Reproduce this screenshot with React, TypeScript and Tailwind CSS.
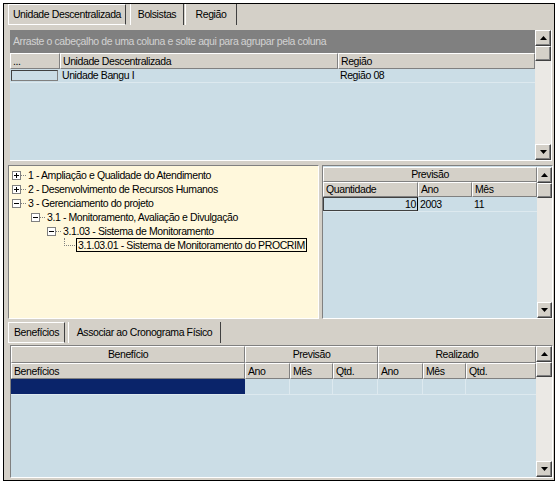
import React from "react";

const raisedBtn =
  "bg-[#d4d0c8] border border-t-white border-l-white border-r-[#404040] border-b-[#404040] shadow-[inset_-1px_-1px_0_#808080]";
const headCell =
  "bg-[#d4d0c8] border-t border-l border-white border-r border-b border-r-[#808080] border-b-[#808080] flex items-center px-[2px] overflow-hidden whitespace-nowrap";

function Arrow({ dir }: { dir: "up" | "down" }) {
  return (
    <svg width="7" height="4" viewBox="0 0 7 4">
      {dir === "up" ? <polygon points="3.5,0 7,4 0,4" fill="#000" /> : <polygon points="0,0 7,0 3.5,4" fill="#000" />}
    </svg>
  );
}

function ScrollBar({ width = 16 }: { width?: number }) {
  return (
    <div className="flex flex-col h-full shrink-0 bg-[#ebe9e5]" style={{ width }}>
      <div className={`${raisedBtn} h-[16px] flex items-center justify-center`}>
        <Arrow dir="up" />
      </div>
      <div className={`${raisedBtn} h-[15px]`} />
      <div className="flex-1" />
      <div className={`${raisedBtn} h-[16px] flex items-center justify-center`}>
        <Arrow dir="down" />
      </div>
    </div>
  );
}

function Tab({ label, selected, w, ml }: { label: string; selected?: boolean; w: string; ml: string }) {
  return (
    <div
      className={`${w} ${ml} h-[21px] flex items-center justify-center border-l border-white border-r border-r-[#404040] ${
        selected ? "border-t border-b" : ""
      }`}
    >
      {label}
    </div>
  );
}

function ExpandBox({ open }: { open: boolean }) {
  return (
    <div className="relative w-[9px] h-[9px] border border-[#808080] bg-white shrink-0">
      <div className="absolute left-[1px] top-[3px] w-[5px] h-[1px] bg-black" />
      {!open && <div className="absolute left-[3px] top-[1px] w-[1px] h-[5px] bg-black" />}
    </div>
  );
}

function TreeRow({ pl, open, label }: { pl: string; open: boolean; label: string }) {
  return (
    <div className={`h-[14px] flex items-center ${pl}`}>
      <ExpandBox open={open} />
      <div className="w-[5px] border-t border-dotted border-[#808080] mr-[2px]" />
      <span>{label}</span>
    </div>
  );
}

export default function App() {
  return (
    <div className="w-[558px] h-[484px] bg-white p-[3px] text-[10.5px] tracking-[-0.4px] leading-none whitespace-nowrap text-black font-['Liberation_Sans',Arial,sans-serif]">
      <div className="w-[552px] h-[478px] border border-black bg-[#d4d0c8] flex flex-col">
        {/* top tabs */}
        <div className="flex pl-[4px]">
          <Tab label="Unidade Descentralizada" selected w="w-[118px]" ml="ml-0" />
          <Tab label="Bolsistas" w="w-[54px]" ml="ml-[4px]" />
          <Tab label="Região" w="w-[52px]" ml="ml-[1px]" />
        </div>

        {/* top grid */}
        <div className="ml-[6px] mt-[5px] w-[542px] h-[131px] flex border-r border-b border-white">
          <div className="flex-1 flex flex-col bg-[#cbdde6]">
            <div className="h-[23px] bg-[#808080] text-[#d2d2d2] flex items-center pl-[3px]">
              Arraste o cabeçalho de uma coluna e solte aqui para agrupar pela coluna
            </div>
            <div className="flex h-[16px]">
              <div className={`${headCell} w-[50px]`}>...</div>
              <div className={`${headCell} w-[278px]`}>Unidade Descentralizada</div>
              <div className={`${headCell} flex-1`}>Região</div>
            </div>
            <div className="flex h-[14px] border-b border-[#dde9ef]">
              <div className="w-[50px] p-[1px] pr-[2px]">
                <div className="h-full border border-[#404040] border-r-[#808080] border-b-[#808080]" />
              </div>
              <div className="w-[278px] flex items-center px-[2px]">Unidade Bangu I</div>
              <div className="flex-1 flex items-center px-[2px]">Região 08</div>
            </div>
          </div>
          <ScrollBar />
        </div>

        {/* middle area */}
        <div className="flex mt-[4px] pl-[4px] h-[154px]">
          <div className="w-[311px] h-full bg-[#fff8dc] border-t border-l border-[#808080] border-r border-b border-r-white border-b-white pt-[2px]">
            <TreeRow pl="pl-[3px]" open={false} label="1 - Ampliação e Qualidade do Atendimento" />
            <TreeRow pl="pl-[3px]" open={false} label="2 - Desenvolvimento de Recursos Humanos" />
            <TreeRow pl="pl-[3px]" open label="3 - Gerenciamento do projeto" />
            <TreeRow pl="pl-[22px]" open label="3.1 - Monitoramento, Avaliação e Divulgação" />
            <TreeRow pl="pl-[38px]" open label="3.1.03 - Sistema de Monitoramento" />
            <div className="h-[14px] flex items-center pl-[55px]">
              <div className="w-[11px] h-[8px] border-l border-b border-dotted border-[#808080] -mt-[7px] mr-[1px]" />
              <span className="border border-black px-[1px] h-[14px] flex items-center">
                3.1.03.01 - Sistema de Monitoramento do PROCRIM
              </span>
            </div>
          </div>
          <div className="ml-[3px] w-[231px] h-full flex bg-[#cbdde6] border-t border-l border-[#808080] pt-[1px] border-r border-b border-r-white border-b-white">
            <div className="flex-1 flex flex-col">
              <div className={`${headCell} h-[15px] justify-center`}>Previsão</div>
              <div className="flex h-[15px]">
                <div className={`${headCell} w-[95px]`}>Quantidade</div>
                <div className={`${headCell} w-[54px]`}>Ano</div>
                <div className={`${headCell} flex-1`}>Mês</div>
              </div>
              <div className="flex h-[15px] border-b border-[#dde9ef]">
                <div className="w-[95px] border border-[#404040] border-r-black flex items-center justify-end pr-[1px]">10</div>
                <div className="w-[54px] flex items-center px-[2px]">2003</div>
                <div className="flex-1 flex items-center px-[2px]">11</div>
              </div>
            </div>
            <ScrollBar width={15} />
          </div>
        </div>

        {/* bottom tabs */}
        <div className="flex pl-[4px] mt-[3px]">
          <Tab label="Benefícios" selected w="w-[57px]" ml="ml-0" />
          <Tab label="Associar ao Cronograma Físico" w="w-[153px]" ml="ml-[3px]" />
        </div>

        {/* bottom grid */}
        <div className="ml-[6px] mt-[2px] w-[543px] h-[133px] flex border-t border-l border-[#808080] border-r border-b border-r-white border-b-white">
          <div className="flex-1 flex flex-col bg-[#cbdde6]">
            <div className="flex h-[17px]">
              <div className={`${headCell} w-[234px] justify-center`}>Benefício</div>
              <div className={`${headCell} w-[133px] justify-center`}>Previsão</div>
              <div className={`${headCell} flex-1 justify-center`}>Realizado</div>
            </div>
            <div className="flex h-[16px]">
              <div className={`${headCell} w-[234px]`}>Benefícios</div>
              <div className={`${headCell} w-[45px]`}>Ano</div>
              <div className={`${headCell} w-[43px]`}>Mês</div>
              <div className={`${headCell} w-[45px]`}>Qtd.</div>
              <div className={`${headCell} w-[45px]`}>Ano</div>
              <div className={`${headCell} w-[43px]`}>Mês</div>
              <div className={`${headCell} flex-1`}>Qtd.</div>
            </div>
            <div className="flex h-[16px] border-b border-[#dde9ef]">
              <div className="w-[234px] bg-[#0a246a]" />
              <div className="w-[45px] border-r border-[#dde9ef]" />
              <div className="w-[43px] border-r border-[#dde9ef]" />
              <div className="w-[45px] border-r border-[#dde9ef]" />
              <div className="w-[45px] border-r border-[#dde9ef]" />
              <div className="w-[43px] border-r border-[#dde9ef]" />
              <div className="flex-1" />
            </div>
          </div>
          <ScrollBar />
        </div>
      </div>
    </div>
  );
}
